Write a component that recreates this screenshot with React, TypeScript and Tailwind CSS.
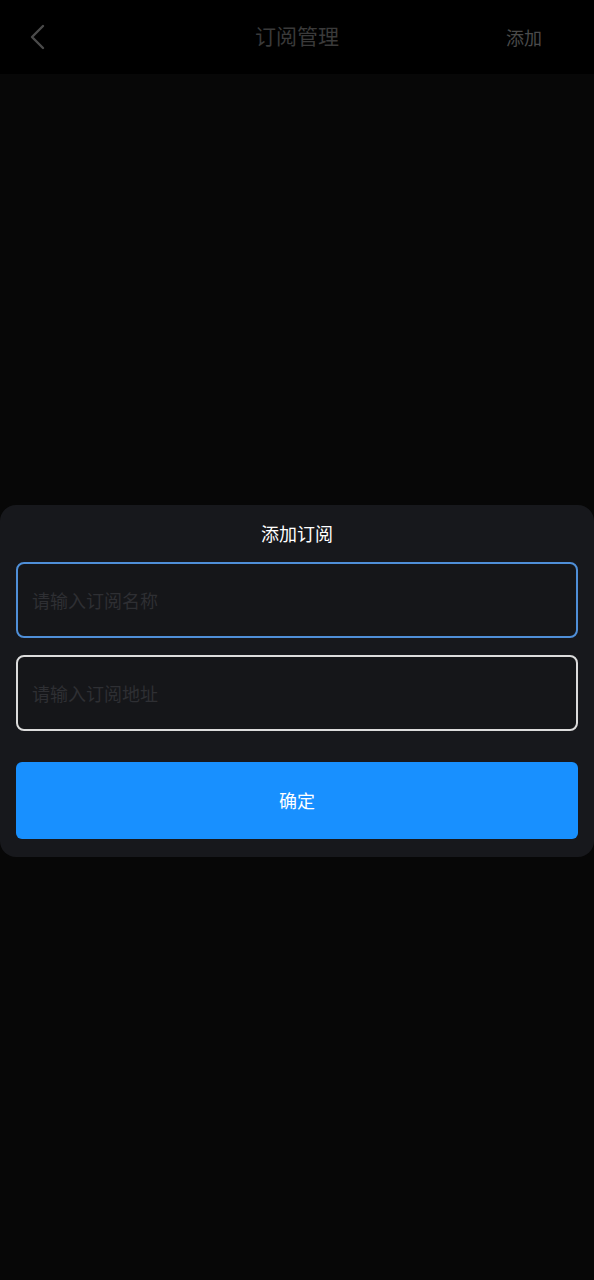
import { useState } from 'react';

const font = { fontFamily: '"Noto Sans CJK SC", "Noto Sans", sans-serif' };

const App = () => {
  const [name, setName] = useState('');
  const [url, setUrl] = useState('');

  return (
    <div style={font} className="w-[594px] h-[1280px] bg-[#070707] flex flex-col overflow-hidden">
      <header className="h-[74px] bg-black flex items-center justify-between px-[28px] shrink-0">
        <button className="w-[24px] h-[30px] flex items-center justify-start">
          <svg width="18" height="26" viewBox="0 0 18 26" fill="none">
            <path d="M15 2 L4 13 L15 24" stroke="#4a4a4a" strokeWidth="2.4" strokeLinecap="round" strokeLinejoin="round" />
          </svg>
        </button>
        <h1 className="text-[21px] text-[#3a3a3a] leading-none pl-[36px] -mt-[3px]">订阅管理</h1>
        <button className="text-[18px] text-[#4a4a4a] leading-none pr-[24px]">添加</button>
      </header>

      <main className="flex-1 pt-[431px]">
        <div className="bg-[#17181c] rounded-2xl px-[16px] pb-[18px]">
          <div className="h-[57px] flex items-center justify-center">
            <h2 className="text-[18px] text-white leading-none -mt-[2px]">添加订阅</h2>
          </div>
          <input
            type="text"
            value={name}
            onChange={(e) => setName(e.target.value)}
            placeholder="请输入订阅名称"
            className="block w-full h-[76px] px-[14px] bg-[#151619] border-2 border-[#4f8fd8] rounded-lg text-[18px] text-white placeholder:text-[#2e2f33] outline-none"
          />
          <input
            type="text"
            value={url}
            onChange={(e) => setUrl(e.target.value)}
            placeholder="请输入订阅地址"
            className="block w-full h-[76px] mt-[17px] px-[14px] bg-[#151619] border-2 border-[#dcdcdc] rounded-lg text-[18px] text-white placeholder:text-[#2e2f33] outline-none"
          />
          <button className="w-full h-[77px] mt-[31px] bg-[#1890ff] rounded-md text-[18px] text-white">
            确定
          </button>
        </div>
      </main>
    </div>
  );
};

export default App;
